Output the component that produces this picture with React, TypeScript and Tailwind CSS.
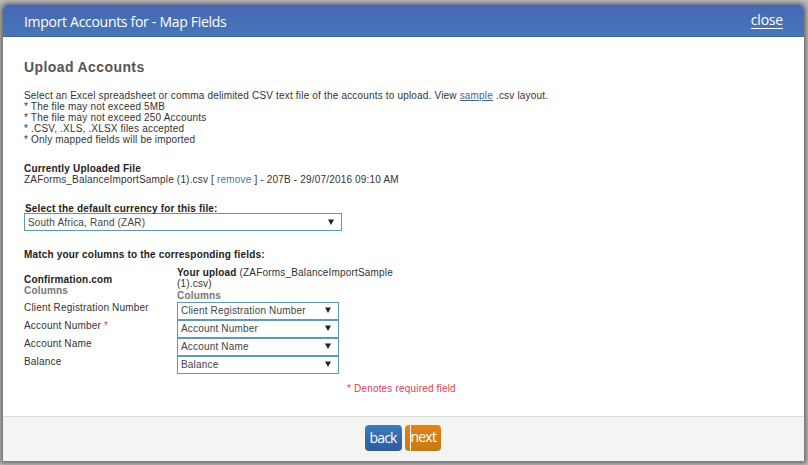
const body = "font-['Liberation_Sans',Arial,sans-serif] text-[10px] leading-[11px] tracking-[0.18px] text-[#333]";

const SelectBox = ({ label, className }: { label: string; className: string }) => (
  <div className={`flex items-center justify-between border border-[#5b9aba] bg-white pl-[3px] pr-[7px] text-[#444] ${className}`}>
    <span>{label}</span>
    <svg width="6" height="6" viewBox="0 0 6 6" className="mb-px">
      <path d="M0 0.5h6L3 6z" fill="#222" />
    </svg>
  </div>
);

const rows = [
  { name: "Client Registration Number", required: false },
  { name: "Account Number", required: true },
  { name: "Account Name", required: false },
  { name: "Balance", required: false },
];

export default function App() {
  return (
    <div className="h-[465px] w-[808px] overflow-hidden bg-[#b9b9b9] pl-[3px] pr-[4px] pt-[5px]">
      <div className={`flex h-[456px] flex-col overflow-hidden rounded-t-[5px] bg-white shadow-[0_0_4px_2px_rgba(70,70,70,0.7)] ${body}`}>
        <div className="flex h-[32px] shrink-0 items-start justify-between border-b border-[#3a68a4] bg-gradient-to-b from-[#4767b6] to-[#4876b6] pl-[21px] pr-[21px] pt-[7px] font-['Open_Sans',sans-serif] text-white">
          <h1 className="text-[14px] font-normal leading-[20px] tracking-[-0.3px]">Import Accounts for - Map Fields</h1>
          <a className="-mt-px border-b border-white text-[14px] leading-[17px] tracking-[-0.2px]">close</a>
        </div>

        <div className="flex-1 pl-[21px]">
          <h2 className="mt-[22px] text-[14px] font-bold leading-[16px] tracking-[0.4px] text-[#555]">Upload Accounts</h2>
          <div className="mt-[15px]">
            <p>
              Select an Excel spreadsheet or comma delimited CSV text file of the accounts to upload. View{" "}
              <a className="text-[#4a5f94] underline">sample</a> .csv layout.
            </p>
            <p>* The file may not exceed 5MB</p>
            <p>* The file may not exceed 250 Accounts</p>
            <p>* .CSV, .XLS, .XLSX files accepted</p>
            <p>* Only mapped fields will be imported</p>
          </div>

          <div className="mt-[18px]">
            <p className="font-bold text-[#222]">Currently Uploaded File</p>
            <p>
              ZAForms_BalanceImportSample (1).csv [ <a className="text-[#3d7a96]">remove</a> ] - 207B - 29/07/2016 09:10 AM
            </p>
          </div>

          <p className="ml-px mt-[18px] font-bold text-[#222]">Select the default currency for this file:</p>
          <SelectBox label="South Africa, Rand (ZAR)" className="mt-[-1px] h-[18px] w-[318px]" />

          <p className="mt-[18px] font-bold text-[#222]">Match your columns to the corresponding fields:</p>

          <div className="mt-[7px] flex">
            <div className="w-[153px] shrink-0 pt-[7px]">
              <p className="font-bold text-[#222]">Confirmation.com</p>
              <p className="font-bold text-[#777]">Columns</p>
              <div className="mt-[6px] flex flex-col">
                {rows.map((row) => (
                  <div key={row.name} className="h-[18px]">
                    {row.name}
                    {row.required && <span className="text-[#d9434e]"> *</span>}
                  </div>
                ))}
              </div>
            </div>
            <div className="w-[222px]">
              <p>
                <b className="text-[#222]">Your upload</b> (ZAForms_BalanceImportSample
                <br />
                (1).csv)
              </p>
              <p className="mt-px font-bold text-[#777]">Columns</p>
              <div className="mt-px flex w-[162px] flex-col">
                {rows.map((row) => (
                  <SelectBox key={row.name} label={row.name} className="h-[18px] pb-px" />
                ))}
              </div>
            </div>
          </div>

          <p className="mt-[9px] pl-[323px] text-[#e0404c]">* Denotes required field</p>
        </div>

        <div className="flex h-[45px] shrink-0 justify-center gap-[3px] border-t border-[#dcdcd8] bg-[#f4f4f2] pr-[2px] pt-[8px] font-['Open_Sans',sans-serif] text-[14px] tracking-[-0.8px] text-white">
          <button className="h-[26px] w-[37px] rounded-[4px] bg-gradient-to-b from-[#3d7cba] to-[#2f5a9f] leading-[24px]">back</button>
          <button className="flex h-[26px] w-[36px] rounded-[4px] bg-gradient-to-b from-[#e4811c] to-[#c47c0c] text-left leading-[24px]">
            <span className="h-full w-[6px] shrink-0 border-r border-white" />
            <span>next</span>
          </button>
        </div>
      </div>
    </div>
  );
}
